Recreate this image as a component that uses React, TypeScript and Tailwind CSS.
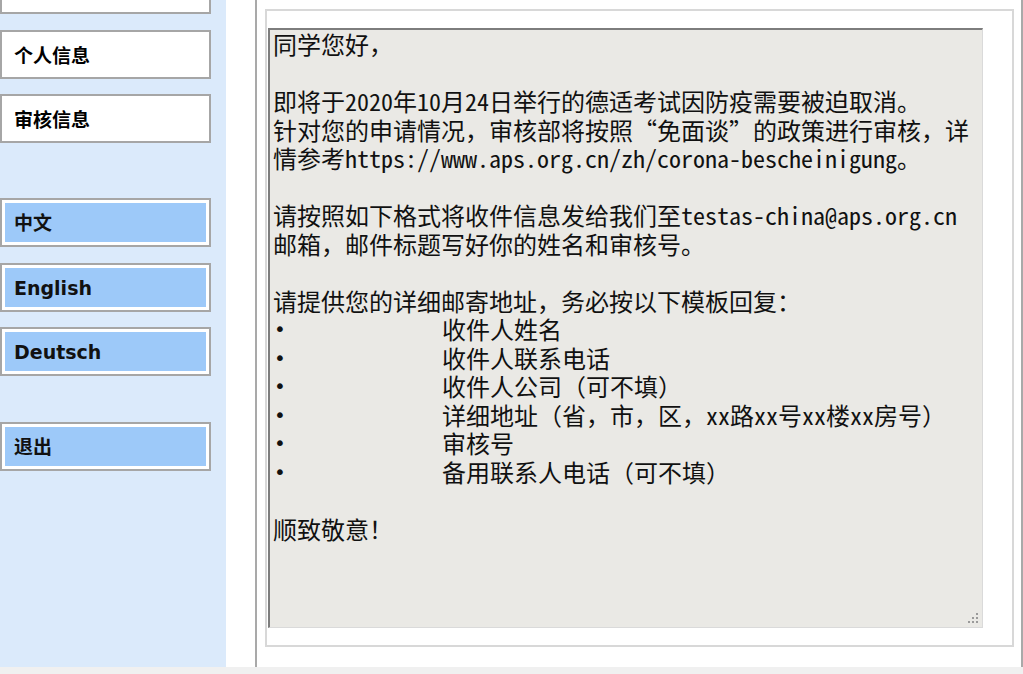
import React from "react";

const navTop = [
  { label: "通知信息", mt: "-mt-[35px]" },
  { label: "个人信息", mt: "mt-[16px]" },
  { label: "审核信息", mt: "mt-[15px]" },
];

const langs = [
  { label: "中文", mt: "mt-[55px]" },
  { label: "English", mt: "mt-[16px]" },
  { label: "Deutsch", mt: "mt-[15px]" },
  { label: "退出", mt: "mt-[46px]" },
];

const items = [
  "收件人姓名",
  "收件人联系电话",
  "收件人公司（可不填）",
  "详细地址（省，市，区，xx路xx号xx楼xx房号）",
  "审核号",
  "备用联系人电话（可不填）",
];

const navFont = { fontFamily: '"DejaVu Sans", "Noto Sans CJK SC", sans-serif' };
const bodyFont = {
  fontFamily: '"Noto Sans Mono CJK SC", "Noto Sans CJK SC", "DejaVu Sans Mono", monospace',
};

function Line({ children }: { children?: React.ReactNode }) {
  return <div className="h-[28.5px] whitespace-pre">{children ?? " "}</div>;
}

export default function App() {
  return (
    <div className="w-[1023px] h-[674px] flex flex-col bg-white overflow-hidden">
      <div className="h-[667px] flex">
        {/* sidebar */}
        <div className="w-[226px] bg-[#dbeafb] flex flex-col overflow-hidden" style={navFont}>
          {navTop.map((n) => (
            <div
              key={n.label}
              className={`${n.mt} w-[211px] h-[49px] shrink-0 bg-white border-2 border-[#a6a6a6] flex items-center pl-[12px] pt-[4px] text-[19px] font-bold text-black`}
            >
              {n.label}
            </div>
          ))}
          {langs.map((l) => (
            <div
              key={l.label}
              className={`${l.mt} w-[211px] h-[49px] shrink-0 bg-white border-2 border-[#a6a6a6] p-[3px]`}
            >
              <div className="h-full bg-[#9dc9f9] flex items-center pl-[9px] pt-[2px] text-[19px] font-bold text-[#111]">
                {l.label}
              </div>
            </div>
          ))}
        </div>

        {/* main */}
        <div className="ml-[29px] w-[768px] border-l-2 border-r-2 border-[#a9a9a9] pl-[8px] pr-[7px] pt-[9px]">
          <div className="w-[749px] h-[638px] border-2 border-[#d8d8d8] pl-[1px] pt-[17px] pr-[29px] pb-[17px]">
            <div
              className="relative w-[715px] h-[600px] bg-[#eae9e5] border-t-2 border-l-2 border-[#7d7d7d] border-r border-b border-r-[#dadada] border-b-[#dadada] pl-[3px] pt-0 text-[24px] leading-[28.5px] text-[#111] overflow-hidden"
              style={bodyFont}
            >
              <Line>同学您好，</Line>
              <Line />
              <Line>即将于2020年10月24日举行的德适考试因防疫需要被迫取消。</Line>
              <Line>针对您的申请情况，审核部将按照“免面谈”的政策进行审核，详</Line>
              <Line>情参考https://www.aps.org.cn/zh/corona-bescheinigung。</Line>
              <Line />
              <Line>请按照如下格式将收件信息发给我们至testas-china@aps.org.cn</Line>
              <Line>邮箱，邮件标题写好你的姓名和审核号。</Line>
              <Line />
              <Line>请提供您的详细邮寄地址，务必按以下模板回复：</Line>
              {items.map((t) => (
                <div key={t} className="h-[28.5px] flex whitespace-pre">
                  <span
                    className="w-[169px] pl-[1px] text-[20px] leading-[28.5px]"
                    style={{ fontFamily: '"DejaVu Sans", sans-serif' }}
                  >
                    •
                  </span>
                  <span>{t}</span>
                </div>
              ))}
              <Line />
              <Line>顺致敬意！</Line>

              {/* resize grip */}
              <svg className="absolute right-[3px] bottom-[3px]" width="12" height="12" viewBox="0 0 12 12">
                {[
                  [9, 1],
                  [9, 5],
                  [5, 5],
                  [9, 9],
                  [5, 9],
                  [1, 9],
                ].map(([x, y]) => (
                  <rect key={`${x}-${y}`} x={x} y={y} width="2" height="2" fill="#9a9a9a" />
                ))}
              </svg>
            </div>
          </div>
        </div>
      </div>
      <div className="h-[7px] bg-[#f0f0f0]" />
    </div>
  );
}
